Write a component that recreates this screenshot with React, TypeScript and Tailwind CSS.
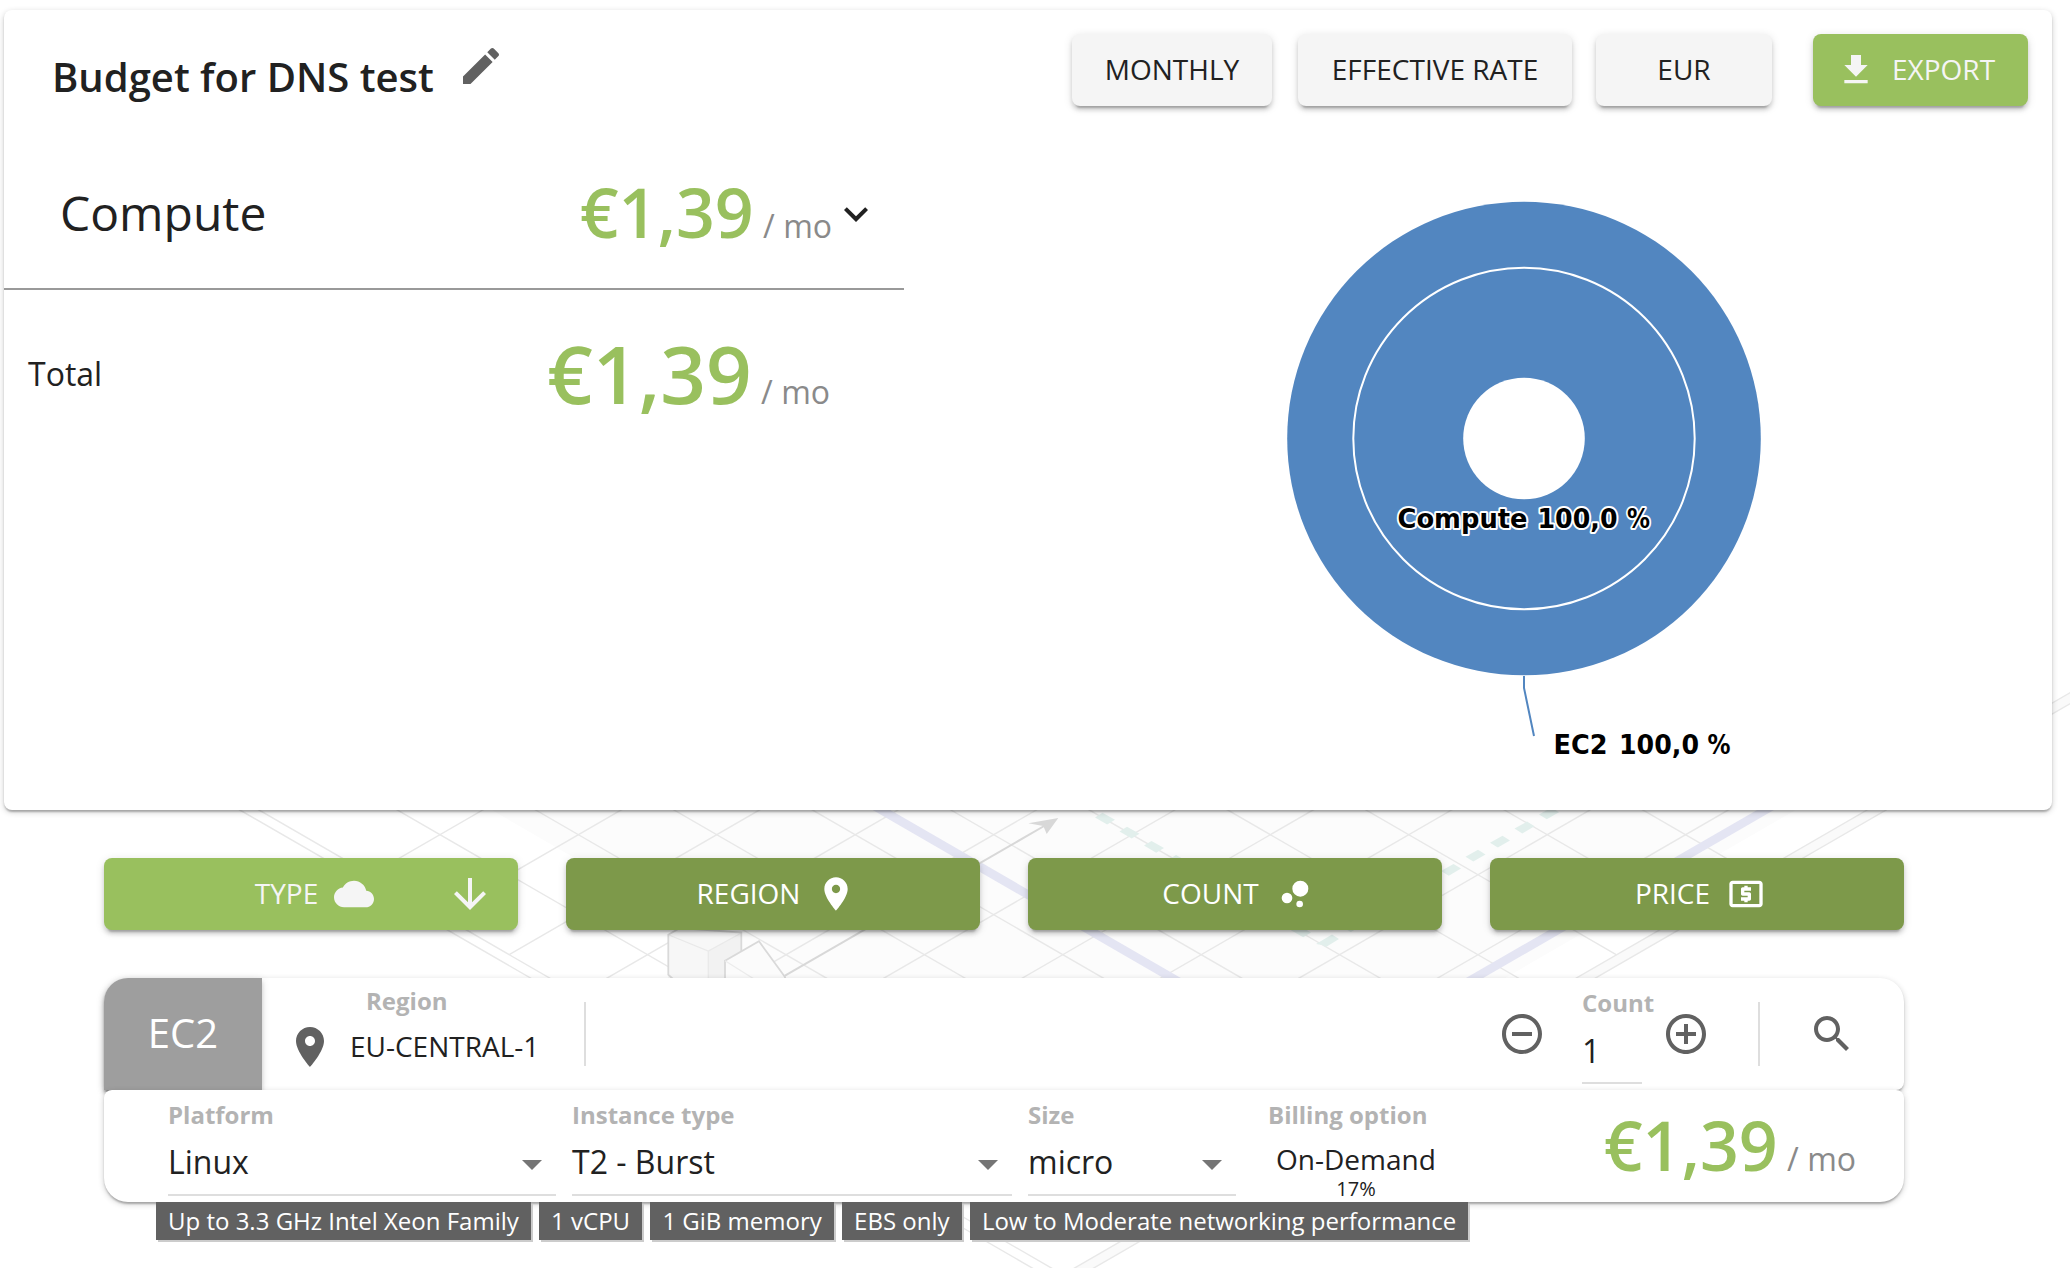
import React from "react";

const RAISED =
  "shadow-[0_6px_2px_-4px_rgba(0,0,0,0.2),0_4px_4px_0_rgba(0,0,0,0.14),0_2px_10px_0_rgba(0,0,0,0.12)]";
const CARD =
  "shadow-[0_2px_6px_0_rgba(0,0,0,0.2),0_2px_2px_0_rgba(0,0,0,0.14),0_4px_2px_-2px_rgba(0,0,0,0.12)]";

const ICONS = {
  edit: "M3 17.25V21h3.75L17.81 9.94l-3.75-3.75L3 17.25zM20.71 7.04c.39-.39.39-1.02 0-1.41l-2.34-2.34c-.39-.39-1.02-.39-1.41 0l-1.83 1.83 3.75 3.75 1.83-1.83z",
  download: "M19 9h-4V3H9v6H5l7 7 7-7zM5 18v2h14v-2H5z",
  expand: "M16.59 8.59L12 13.17 7.41 8.59 6 10l6 6 6-6z",
  cloud:
    "M19.35 10.04C18.67 6.59 15.64 4 12 4 9.11 4 6.6 5.64 5.35 8.04 2.34 8.36 0 10.91 0 14c0 3.31 2.69 6 6 6h13c2.76 0 5-2.24 5-5 0-2.64-2.05-4.78-4.65-4.96z",
  down: "M20 12l-1.41-1.41L13 16.17V4h-2v12.17l-5.58-5.59L4 12l8 8 8-8z",
  place:
    "M12 2C8.13 2 5 5.13 5 9c0 5.25 7 13 7 13s7-7.75 7-13c0-3.87-3.13-7-7-7zm0 9.5c-1.38 0-2.5-1.12-2.5-2.5s1.12-2.5 2.5-2.5 2.5 1.12 2.5 2.5-1.12 2.5-2.5 2.5z",
  bubbles:
    "M4 14.4a3.2 3.2 0 1 0 6.4 0a3.2 3.2 0 1 0-6.4 0zM12.8 18a2 2 0 1 0 4 0a2 2 0 1 0-4 0zM10.4 8.8a4.8 4.8 0 1 0 9.6 0a4.8 4.8 0 1 0-9.6 0z",
  money:
    "M11 17h2v-1h1c.55 0 1-.45 1-1v-3c0-.55-.45-1-1-1h-3v-1h4V8h-2V7h-2v1h-1c-.55 0-1 .45-1 1v3c0 .55.45 1 1 1h3v1H9v2h2v1zm9-13H4c-1.11 0-1.99.89-1.99 2L2 18c0 1.11.89 2 2 2h16c1.11 0 2-.89 2-2V6c0-1.11-.89-2-2-2zm0 14H4V6h16v12z",
  minus:
    "M7 11v2h10v-2H7zm5-9C6.48 2 2 6.48 2 12s4.48 10 10 10 10-4.48 10-10S17.52 2 12 2zm0 18c-4.41 0-8-3.59-8-8s3.59-8 8-8 8 3.59 8 8-3.59 8-8 8z",
  plus: "M13 7h-2v4H7v2h4v4h2v-4h4v-2h-4V7zm-1-5C6.48 2 2 6.48 2 12s4.48 10 10 10 10-4.48 10-10S17.52 2 12 2zm0 18c-4.41 0-8-3.59-8-8s3.59-8 8-8 8 3.59 8 8-3.59 8-8 8z",
  search:
    "M15.5 14h-.79l-.28-.27C15.41 12.59 16 11.11 16 9.5 16 5.91 13.09 3 9.5 3S3 5.91 3 9.5 5.91 16 9.5 16c1.61 0 3.09-.59 4.23-1.57l.27.28v.79l5 4.99L20.49 19l-4.99-5zm-6 0C7.01 14 5 11.99 5 9.5S7.01 5 9.5 5 14 7.01 14 9.5 11.99 14 9.5 14z",
};

function Icon({ name, className }: { name: keyof typeof ICONS; className: string }) {
  return (
    <svg viewBox="0 0 24 24" fill="currentColor" className={`shrink-0 ${className}`}>
      <path d={ICONS[name]} />
    </svg>
  );
}

// Isometric floor plan behind the cards.
const K = 1.73;
const BASE_Y = 834.7;
const STEP = 138.4;
const TOP = 690;
const APEX_Y = 1274.7;

function Backdrop() {
  const left = 301.6;
  const right = 1824.4;
  const lines: React.ReactNode[] = [];
  for (let k = 0; k < 10; k++) {
    const x = left + STEP * (k + 1);
    const yEnd = BASE_Y + (right - x) / (2 * K);
    lines.push(
      <line key={`d${k}`} x1={x + (TOP - BASE_Y) * K} y1={TOP} x2={x + (yEnd - BASE_Y) * K} y2={yEnd} />,
    );
    const uEnd = BASE_Y + (x - left) / (2 * K);
    lines.push(
      <line key={`u${k}`} x1={x - (TOP - BASE_Y) * K} y1={TOP} x2={x - (uEnd - BASE_Y) * K} y2={uEnd} />,
    );
  }
  const at = (x: number, y: number, dir: number) => x + dir * (y - BASE_Y) * K;
  const band = (a: number, b: number, dir: number) =>
    `${at(a, TOP, dir)},${TOP} ${at(b, TOP, dir)},${TOP} ${at(b, 1120, dir)},1120 ${at(a, 1120, dir)},1120`;
  const dashes: React.ReactNode[] = [];
  for (let i = 0; i < 9; i++) {
    dashes.push(
      <polygon key={`a${i}`} points="10,1 -2.5,-6 -10,-1.3 2.2,5.8" transform={`translate(${1105 + 24.5 * i} ${818.7 + 14.1 * i})`} />,
      <polygon key={`b${i}`} points="-10,1 2.5,-6 10,-1.3 -2.2,5.8" transform={`translate(${1549 - 24.5 * i} ${813.5 + 14.1 * i})`} />,
    );
  }
  dashes.push(
    <polygon key="c" points="-12,3 4,-6.5 11,-2 -2,6 -6,4" transform="translate(1328 941)" />,
  );
  return (
    <svg className="absolute inset-0 -z-10" width="2070" height="1268" viewBox="0 0 2070 1268" fill="none">
      <polygon
        fill="#fcfcfc"
        points={`${at(534.5, TOP, 1)},${TOP} ${at(1753, TOP, -1)},${TOP} 1143.7,1186.9`}
      />
      <polygon
        fill="#fafafa"
        points={`${at(right, TOP, -1)},${TOP} ${at(right + 19, TOP, -1)},${TOP} 1072.5,1280 1063,${APEX_Y}`}
      />
      <g stroke="#e8e8e8" strokeWidth="1.4">
        {lines}
        <line x1={at(left, TOP, 1)} y1={TOP} x2="1063" y2={APEX_Y} />
        <line x1={at(left - 19, TOP, 1)} y1={TOP} x2={at(left - 19, 1280, 1)} y2="1280" />
        <line x1={at(right, TOP, -1)} y1={TOP} x2="1063" y2={APEX_Y} />
        <line x1={at(right + 19, TOP, -1)} y1={TOP} x2={at(right + 19, 1280, -1)} y2="1280" />
      </g>
      <polygon fill="#e4e5f3" points={band(915.5, 933, 1)} />
      <polygon fill="#e4e5f3" points={`1792,${BASE_Y - 45} 1809,${BASE_Y - 45} ${at(1731, 1120, -1)},1120 ${at(1713.7, 1120, -1)},1120`} />
      <g fill="#e2efec">{dashes}</g>
      <polygon fill="#f7f7f7" points="668.3,934.7 680,928 741.3,932.7 741.3,990 668.3,990" />
      <polygon fill="#f2f2f2" points="708.3,951 741.3,933 741.3,990 708.3,990" />
      <path d="M668.3 934.7L708.3 951L741.3 933M708.3 951V990" stroke="#e9e9e9" strokeWidth="1.2" />
      <path d="M674 980L668.3 974.7V934.7L680 928L741.3 932.7V955" stroke="#d9d9d9" strokeWidth="1.8" />
      <path d="M725 990V960.7L759 941.3L785 977V990" fill="#fbfbfb" stroke="#d9d9d9" strokeWidth="1.8" />
      <path d="M725 960.7L762 984" stroke="#ececec" strokeWidth="1.2" />
      <path d="M785 975.7L1045 825.5" stroke="#d8d8d8" strokeWidth="2" />
      <polygon fill="#d8d8d8" points="1058.3,818 1028.3,823.3 1043.3,826 1046.7,834" />
    </svg>
  );
}

function Price({ big, className = "" }: { big?: boolean; className?: string }) {
  return (
    <div className={`flex items-baseline whitespace-pre leading-none ${className}`}>
      <span className={`mr-px font-semibold text-[#99c05e] ${big ? "text-[80px]" : "text-[68px]"}`}>€1,39</span>
      <span className="text-[32px] text-[#8a8a8a]"> / mo</span>
    </div>
  );
}

function Chart() {
  return (
    <svg width="560" height="600" viewBox="1250 180 560 600" className="ml-[346px] mt-[50px]" fill="none">
      <circle cx="1524" cy="438.5" r="236.8" fill="#5286c0" />
      <circle cx="1524" cy="438.5" r="170.7" stroke="#fff" strokeWidth="2" />
      <circle cx="1524" cy="438.5" r="60.8" fill="#fff" />
      <path d="M1524 676V688L1534 736" stroke="#5286c0" strokeWidth="2" />
      <g fontFamily='"DejaVu Sans", sans-serif' fontWeight="700" fontSize="26" fill="#000">
        <text y="527.5" stroke="#fff" strokeWidth="4" strokeLinejoin="round" paintOrder="stroke">
          <tspan x="1397.5" textLength="130" lengthAdjust="spacingAndGlyphs">Compute</tspan>{" "}
          <tspan x="1537.5" textLength="80" lengthAdjust="spacingAndGlyphs">100,0</tspan>{" "}
          <tspan x="1627" textLength="23" lengthAdjust="spacingAndGlyphs">%</tspan>
        </text>
        <text y="753.5">
          <tspan x="1553.5" textLength="54" lengthAdjust="spacingAndGlyphs">EC2</tspan>{" "}
          <tspan x="1619" textLength="80" lengthAdjust="spacingAndGlyphs">100,0</tspan>{" "}
          <tspan x="1707.5" textLength="23" lengthAdjust="spacingAndGlyphs">%</tspan>
        </text>
      </g>
    </svg>
  );
}

const FILTERS: { label: string; icon: keyof typeof ICONS; active?: boolean }[] = [
  { label: "TYPE", icon: "cloud", active: true },
  { label: "REGION", icon: "place" },
  { label: "COUNT", icon: "bubbles" },
  { label: "PRICE", icon: "money" },
];

const TAGS = [
  "Up to 3.3 GHz Intel Xeon Family",
  "1 vCPU",
  "1 GiB memory",
  "EBS only",
  "Low to Moderate networking performance",
];

function Label({ children, className = "" }: { children: React.ReactNode; className?: string }) {
  return <div className={`text-[24px] font-bold leading-none text-[#b3b3b3] ${className}`}>{children}</div>;
}

function Field({ label, value, className }: { label: string; value: string; className: string }) {
  return (
    <div className={`flex h-[106px] flex-col border-b-2 border-[#dedede] pt-[13px] ${className}`}>
      <Label>{label}</Label>
      <div className="mt-[19px] flex items-center justify-between pr-[14px]">
        <span className="text-[32px] leading-none">{value}</span>
        <svg width="20" height="10" viewBox="0 0 20 10" className="mt-[6px]">
          <path d="M0 0H20L10 10z" fill="#757575" />
        </svg>
      </div>
    </div>
  );
}

export default function App() {
  return (
    <div className="relative isolate h-[1268px] w-[2070px] overflow-hidden bg-white font-['Open_Sans',sans-serif] text-[#212121]">
      <Backdrop />

      <section className={`ml-[4px] mt-[10px] flex h-[800px] w-[2048px] rounded-[8px] bg-white ${CARD}`}>
        <div className="w-[900px]">
          <div className="flex h-[120px] items-start pl-[48px]">
            <h1 className="mt-[47px] text-[40px] font-semibold leading-none">Budget for DNS test</h1>
            <Icon name="edit" className="ml-[23px] mt-[32px] size-[48px] text-[#616161]" />
          </div>
          <div className="flex h-[160px] items-start border-b-2 border-[#999] pl-[56px] pr-[24px]">
            <div className="mt-[59px] text-[48px] leading-none">Compute</div>
            <Price className="ml-auto mt-[48px]" />
            <Icon name="expand" className="mt-[60px] size-[48px]" />
          </div>
          <div className="flex items-start pl-[24px] pr-[74px]">
            <div className="mt-[68px] text-[32px] leading-none">Total</div>
            <Price big className="ml-auto mt-[43px]" />
          </div>
        </div>
        <div className="flex-1">
          <div className="flex h-[120px] items-start justify-end pr-[24px] pt-[24px] text-[28px]">
            <button className={`mr-[26px] h-[72px] w-[200px] rounded-[8px] bg-[#f5f5f5] pb-[2px] ${RAISED}`}>MONTHLY</button>
            <button className={`mr-[24px] h-[72px] w-[274px] rounded-[8px] bg-[#f5f5f5] pb-[2px] ${RAISED}`}>EFFECTIVE RATE</button>
            <button className={`mr-[41px] h-[72px] w-[176px] rounded-[8px] bg-[#f5f5f5] pb-[2px] ${RAISED}`}>EUR</button>
            <button className={`flex h-[72px] w-[215px] items-center rounded-[8px] bg-[#99c05e] pl-[23px] text-[#f5f5f5] ${RAISED}`}>
              <Icon name="download" className="mr-[16px] size-[40px]" />
              <span className="mb-[2px]">EXPORT</span>
            </button>
          </div>
          <Chart />
        </div>
      </section>

      <div className="ml-[104px] mt-[48px] flex gap-[48px]">
        {FILTERS.map((f) => (
          <button
            key={f.label}
            className={`relative flex h-[72px] w-[414px] items-center justify-center gap-[16px] rounded-[8px] pl-[7px] text-[28px] ${RAISED} ${
              f.active ? "bg-[#99c05e] text-[#f5f5f5]" : "bg-[#7d994a] text-white"
            }`}
          >
            <span className="mb-[2px]">{f.label}</span>
            <Icon name={f.icon} className="size-[40px]" />
            {f.active && <Icon name="down" className="absolute right-[24px] top-[12px] size-[48px]" />}
          </button>
        ))}
      </div>

      <section className="ml-[104px] mt-[48px] w-[1800px]">
        <div className={`flex h-[112px] items-start rounded-t-[24px] rounded-br-[8px] bg-white ${CARD}`}>
          <div className={`flex h-[112px] w-[158px] items-center justify-center rounded-tl-[24px] bg-[#9e9e9e] pb-[2px] text-[40px] text-white ${RAISED}`}>
            EC2
          </div>
          <Icon name="place" className="ml-[24px] mt-[45px] size-[48px] text-[#616161]" />
          <div className="ml-[16px] w-[234px]">
            <Label className="ml-[16px] mt-[11px]">Region</Label>
            <div className="mt-[19px] text-[28px] leading-none">EU-CENTRAL-1</div>
          </div>
          <div className="mt-[24px] h-[64px] w-[2px] bg-[#dedede]" />
          <Icon name="minus" className="ml-auto mt-[32px] size-[48px] text-[#616161]" />
          <div className="ml-[36px] h-[106px] w-[60px] border-b-2 border-[#dedede] pt-[13px]">
            <Label>Count</Label>
            <div className="mt-[20px] text-[32px] leading-none">1</div>
          </div>
          <Icon name="plus" className="ml-[20px] mt-[32px] size-[48px] text-[#616161]" />
          <div className="ml-[48px] mt-[24px] h-[64px] w-[2px] bg-[#dedede]" />
          <Icon name="search" className="ml-[48px] mr-[48px] mt-[32px] size-[48px] text-[#616161]" />
        </div>

        <div className={`relative flex h-[112px] items-start rounded-b-[24px] rounded-t-[8px] bg-white pl-[64px] ${CARD}`}>
          <Field label="Platform" value="Linux" className="w-[388px]" />
          <Field label="Instance type" value="T2 - Burst" className="ml-[16px] w-[440px]" />
          <Field label="Size" value="micro" className="ml-[16px] w-[208px]" />
          <div className="ml-[32px] w-[176px] pt-[13px]">
            <Label>Billing option</Label>
            <div className="mt-[18px] text-center text-[28px] leading-none">On-Demand</div>
            <div className="mt-[6px] text-center text-[20px] leading-none">17%</div>
          </div>
          <Price className="ml-auto mr-[48px] mt-[21px]" />
        </div>

        <div className="relative ml-[52px] flex gap-[8.3px]">
          {TAGS.map((t) => (
            <span
              key={t}
              className="h-[38px] whitespace-nowrap bg-[#616161] px-[12px] text-[24px] leading-[37px] text-white shadow-[2px_2px_0_#cccccc]"
            >
              {t}
            </span>
          ))}
        </div>
      </section>
    </div>
  );
}
